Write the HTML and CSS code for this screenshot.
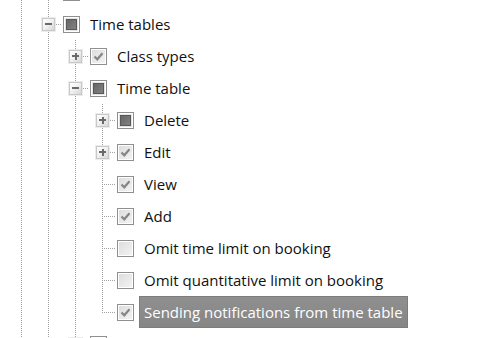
FILE: index.html
```html
<!DOCTYPE html>
<html lang="en">
<head>
    <meta charset="UTF-8">
    <meta name="viewport" content="width=device-width, initial-scale=1.0">
    <title>Permissions</title>
    <link rel="stylesheet" href="styles.css">
</head>
<body>

    <!-- permission tree, scrolled so "Time tables" sits near the top -->
    <div class="tree">

        <div class="row">
            <span class="guide line"></span>
            <span class="guide node"><span class="expander plus"></span></span>
            <span class="check mixed"></span>
            <span class="label">Rooms</span>
        </div>

        <div class="row">
            <span class="guide line"></span>
            <span class="guide node"><span class="expander"></span></span>
            <span class="check mixed"></span>
            <span class="label">Time tables</span>
        </div>

        <div class="row">
            <span class="guide line"></span>
            <span class="guide line"></span>
            <span class="guide node"><span class="expander plus"></span></span>
            <span class="check checked"></span>
            <span class="label">Class types</span>
        </div>

        <div class="row">
            <span class="guide line"></span>
            <span class="guide line"></span>
            <span class="guide node"><span class="expander"></span></span>
            <span class="check mixed"></span>
            <span class="label">Time table</span>
        </div>

        <div class="row">
            <span class="guide line"></span>
            <span class="guide line"></span>
            <span class="guide line"></span>
            <span class="guide node"><span class="expander plus"></span></span>
            <span class="check mixed"></span>
            <span class="label">Delete</span>
        </div>

        <div class="row">
            <span class="guide line"></span>
            <span class="guide line"></span>
            <span class="guide line"></span>
            <span class="guide node"><span class="expander plus"></span></span>
            <span class="check checked"></span>
            <span class="label">Edit</span>
        </div>

        <div class="row">
            <span class="guide line"></span>
            <span class="guide line"></span>
            <span class="guide line"></span>
            <span class="guide tee"></span>
            <span class="check checked"></span>
            <span class="label">View</span>
        </div>

        <div class="row">
            <span class="guide line"></span>
            <span class="guide line"></span>
            <span class="guide line"></span>
            <span class="guide tee"></span>
            <span class="check checked"></span>
            <span class="label">Add</span>
        </div>

        <div class="row">
            <span class="guide line"></span>
            <span class="guide line"></span>
            <span class="guide line"></span>
            <span class="guide tee"></span>
            <span class="check"></span>
            <span class="label">Omit time limit on booking</span>
        </div>

        <div class="row">
            <span class="guide line"></span>
            <span class="guide line"></span>
            <span class="guide line"></span>
            <span class="guide tee"></span>
            <span class="check"></span>
            <span class="label">Omit quantitative limit on booking</span>
        </div>

        <div class="row">
            <span class="guide line"></span>
            <span class="guide line"></span>
            <span class="guide line"></span>
            <span class="guide elbow"></span>
            <span class="check checked"></span>
            <span class="label selected">Sending notifications from time table</span>
        </div>

        <div class="row">
            <span class="guide line"></span>
            <span class="guide line"></span>
            <span class="guide node"><span class="expander plus"></span></span>
            <span class="check"></span>
            <span class="label">reservations</span>
        </div>

    </div>

</body>
</html>
```

FILE: styles.css
```css
body {
    margin: 0;
    background-color: #ffffff;
    font-family: "Open Sans", "Noto Sans", sans-serif;
    font-size: 15px;
    color: #111111;
    overflow: hidden;
}

.tree {
    display: flex;
    flex-direction: column;
    margin-top: -24px;
    padding-left: 8px;
}

.row {
    display: flex;
    align-items: center;
    height: 32px;
}

/* Dotted connector columns */
.guide {
    display: flex;
    align-items: center;
    flex: 0 0 27px;
    height: 32px;
    background-repeat: no-repeat;
}

.line {
    background-image: repeating-linear-gradient(to bottom, #a0a0a0 0 1px, transparent 1px 2px);
    background-size: 1px 100%;
    background-position: 13px 0;
}

.tee,
.node {
    background-image:
        repeating-linear-gradient(to bottom, #a0a0a0 0 1px, transparent 1px 2px),
        repeating-linear-gradient(to right, #a0a0a0 0 1px, transparent 1px 2px);
    background-size: 1px 100%, 14px 1px;
    background-position: 13px 0, 13px 16px;
}

.elbow {
    background-image:
        repeating-linear-gradient(to bottom, #a0a0a0 0 1px, transparent 1px 2px),
        repeating-linear-gradient(to right, #a0a0a0 0 1px, transparent 1px 2px);
    background-size: 1px 17px, 14px 1px;
    background-position: 13px 0, 13px 16px;
}

/* Expand / collapse toggle */
.expander {
    box-sizing: border-box;
    width: 13px;
    height: 13px;
    margin-left: 7px;
    border: 1px solid #c8c8c8;
    background-color: #f2f2f2;
    background-image:
        linear-gradient(#6a6a6a, #6a6a6a),
        linear-gradient(135deg, #ffffff 0%, #f0f0f0 50%, #d6d6d6 100%);
    background-size: 7px 2px, 100% 100%;
    background-position: center, 0 0;
    background-repeat: no-repeat;
    box-shadow: 0 0 0 1px #ececec;
}

.expander.plus {
    background-image:
        linear-gradient(#6a6a6a, #6a6a6a),
        linear-gradient(#6a6a6a, #6a6a6a),
        linear-gradient(135deg, #ffffff 0%, #f0f0f0 50%, #d6d6d6 100%);
    background-size: 7px 2px, 2px 7px, 100% 100%;
    background-position: center, center, 0 0;
}

/* Check boxes */
.check {
    box-sizing: border-box;
    flex: 0 0 17px;
    height: 17px;
    margin-left: 1px;
    border: 1px solid #8e8f8f;
    background: linear-gradient(135deg, #dcdcdc, #f4f4f4);
    box-shadow: inset 0 0 0 1px #ffffff;
}

.check.checked {
    background-image:
        url("data:image/svg+xml;utf8,<svg xmlns='http://www.w3.org/2000/svg' width='15' height='15'><path d='M3.5 7.5 L6.3 10.3 L11.5 4.2' fill='none' stroke='%23858585' stroke-width='2.2'/></svg>"),
        linear-gradient(135deg, #dcdcdc, #f4f4f4);
    background-repeat: no-repeat;
}

.check.mixed {
    background: linear-gradient(135deg, #5e5e5e, #8a8a8a);
    box-shadow: inset 0 0 0 1px #ffffff, inset 0 0 0 2px #e4e4e4, inset 0 0 0 3px #585858;
}

.label {
    margin-left: 5px;
    padding: 0 4px;
    line-height: 30px;
    border: 1px solid transparent;
    white-space: nowrap;
}

.label.selected {
    color: #ffffff;
    background: linear-gradient(#8f8f8f, #868686);
    border-color: #7c7c7c;
}
```
